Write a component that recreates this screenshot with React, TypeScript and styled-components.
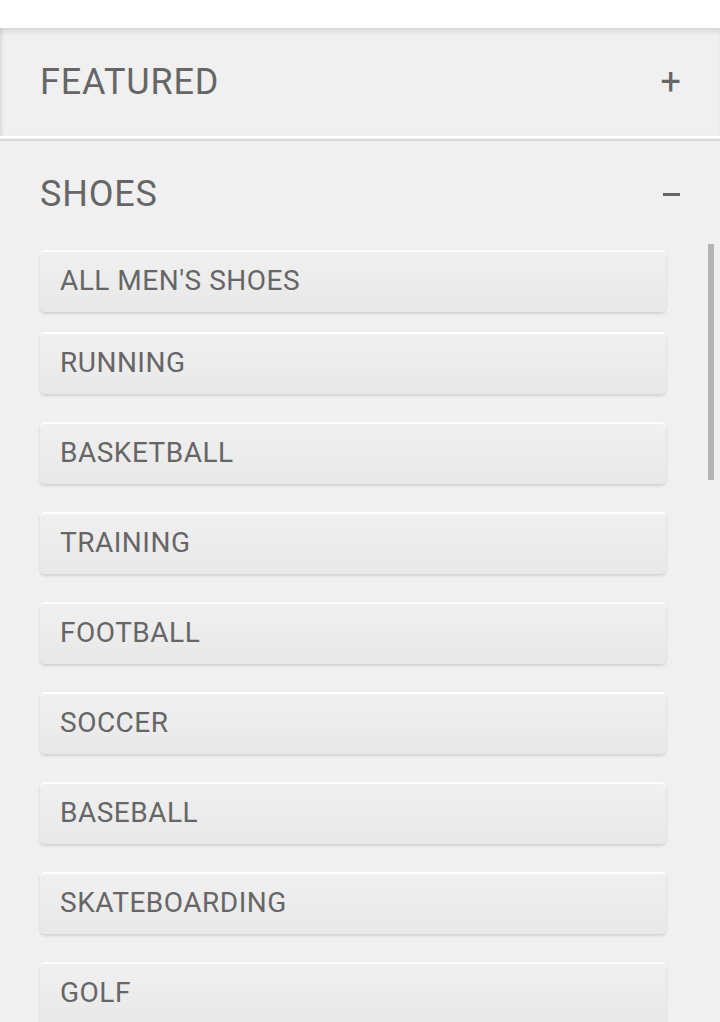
import React from "react";
import styled, { createGlobalStyle } from "styled-components";

const Global = createGlobalStyle`
  html, body { margin: 0; padding: 0; background: #f0f0f0; }
  body { font-family: Roboto, "Noto Sans", sans-serif; overflow: hidden; }
`;

const Page = styled.div`
  width: 720px;
  height: 1022px;
  overflow: hidden;
  background: #f0f0f0;
`;

const TopBar = styled.div`
  height: 28px;
  background: #ffffff;
`;

const Section = styled.section<{ $collapsed?: boolean }>`
  position: relative;
  background: #f0f0f0;
  ${(p) =>
    p.$collapsed
      ? `
    box-shadow: inset 0 6px 6px -3px rgba(0,0,0,0.12), inset 3px 0 4px -2px rgba(0,0,0,0.1);
    border-bottom: 2px solid #ffffff;
  `
      : `
    border-top: 2px solid #d9d9d9;
    margin-top: 1px;
  `}
`;

const Header = styled.div<{ $h: number }>`
  height: ${(p) => p.$h}px;
  display: flex;
  align-items: center;
  justify-content: space-between;
  padding: 0 39px 0 40px;
`;

const Title = styled.h2`
  margin: 0;
  font-family: Roboto, sans-serif;
  font-weight: 400;
  font-size: 36px;
  color: #666666;
  letter-spacing: 0.8px;
`;

const Toggle = styled.span`
  font-family: Roboto, sans-serif;
  font-size: 36px;
  color: #666666;
  line-height: 1;
`;

const MinusBar = styled.span`
  display: block;
  width: 17px;
  height: 3px;
  background: #666666;
  margin-right: 1px;
`;

const Body = styled.div`
  position: relative;
  display: flex;
  flex-direction: column;
  padding: 3px 54px 0 40px;
`;

const Item = styled.div<{ $gap: number }>`
  box-sizing: border-box;
  height: 62px;
  margin-bottom: ${(p) => p.$gap}px;
  display: flex;
  align-items: center;
  padding: 0 0 3px 20px;
  border-top: 2px solid #ffffff;
  border-radius: 5px;
  background: linear-gradient(#f0f0f0, #e8e8e8);
  box-shadow: 0 2px 3px rgba(0, 0, 0, 0.12), 0 0 1px rgba(0, 0, 0, 0.08);
  font-family: Roboto, sans-serif;
  font-size: 28px;
  color: #666666;
  letter-spacing: 0.5px;
`;

const Scrollbar = styled.div`
  position: absolute;
  right: 6px;
  top: -3px;
  width: 6px;
  height: 236px;
  background: #b4b4b4;
`;

const items = [
  "ALL MEN'S SHOES",
  "RUNNING",
  "BASKETBALL",
  "TRAINING",
  "FOOTBALL",
  "SOCCER",
  "BASEBALL",
  "SKATEBOARDING",
  "GOLF",
];

export default function App() {
  return (
    <Page>
      <Global />
      <TopBar />
      <Section $collapsed>
        <Header $h={108}>
          <Title>FEATURED</Title>
          <Toggle>+</Toggle>
        </Header>
      </Section>
      <Section>
        <Header $h={106}>
          <Title>SHOES</Title>
          <MinusBar />
        </Header>
        <Body>
          <Scrollbar />
          {items.map((t, i) => (
            <Item key={t} $gap={i === 0 ? 20 : 28}>
              {t}
            </Item>
          ))}
        </Body>
      </Section>
    </Page>
  );
}
